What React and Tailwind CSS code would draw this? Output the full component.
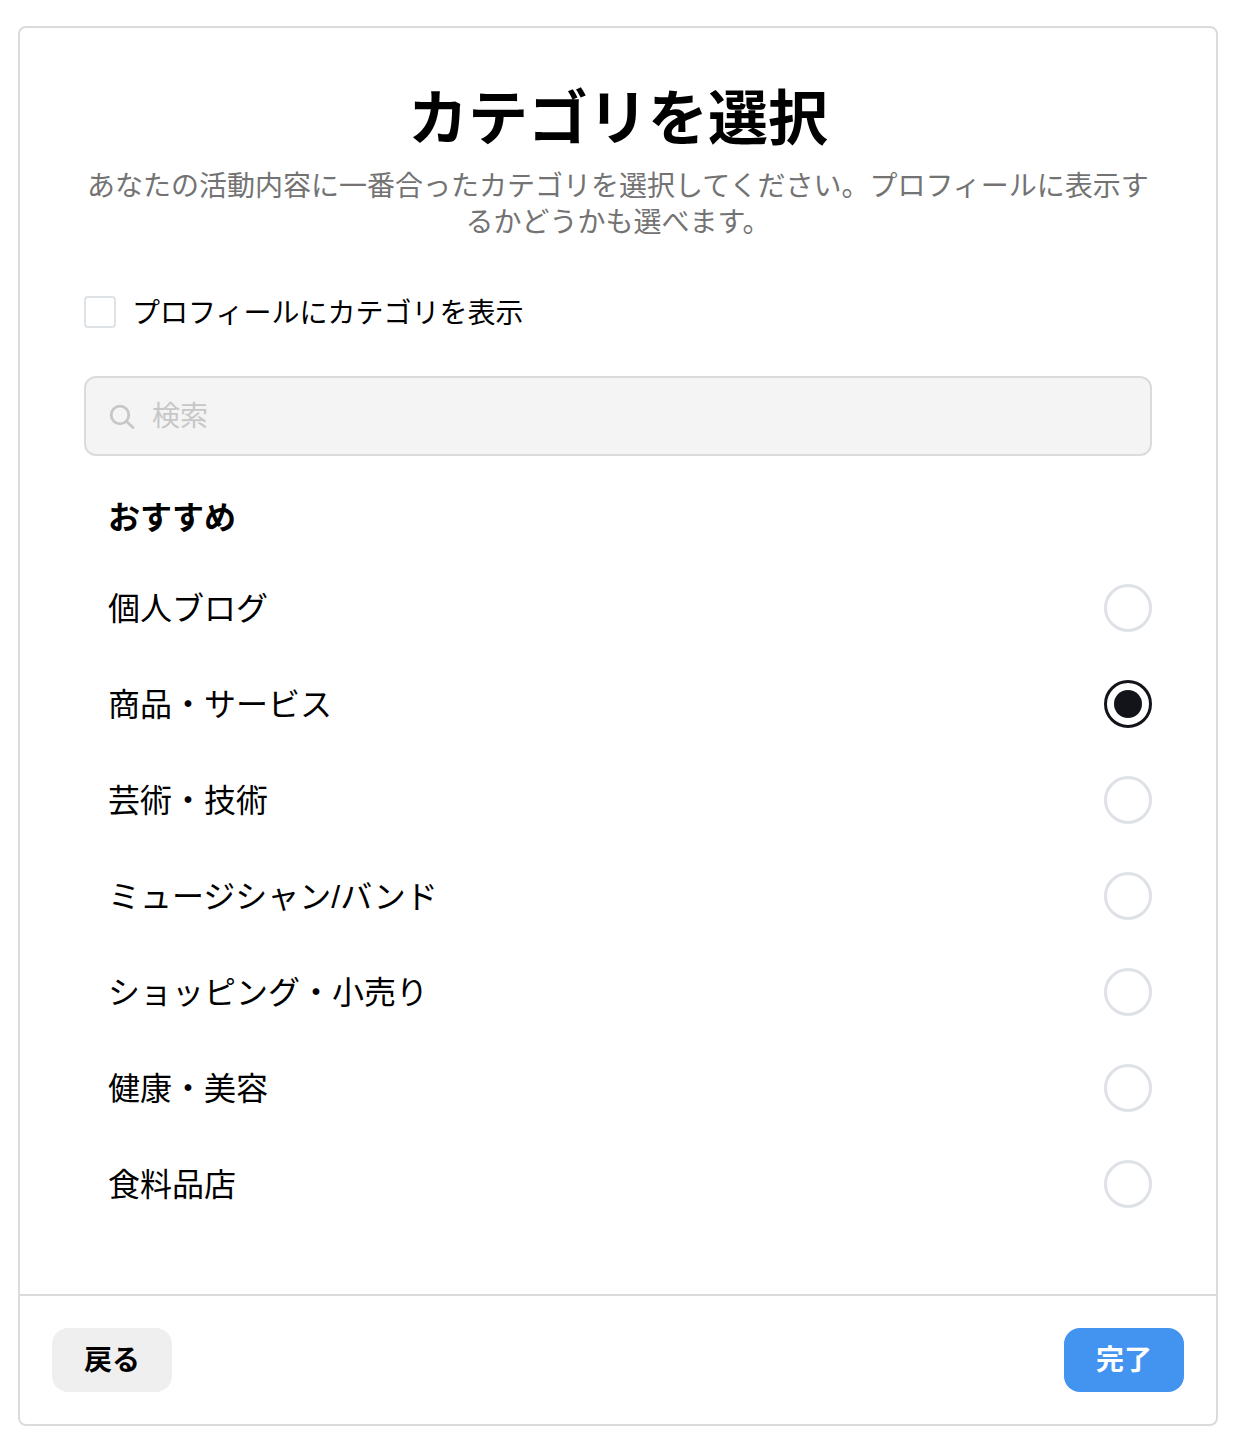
import { useState } from "react";

const categories = [
  "個人ブログ",
  "商品・サービス",
  "芸術・技術",
  "ミュージシャン/バンド",
  "ショッピング・小売り",
  "健康・美容",
  "食料品店",
];

const App = () => {
  const [selected, setSelected] = useState("商品・サービス");
  const [showOnProfile, setShowOnProfile] = useState(false);

  return (
    <div className="min-h-[1444px] bg-white pl-[18px] pt-[26px] font-['Liberation_Sans','Noto_Sans_CJK_JP',sans-serif] text-black">
      <div className="flex h-[1400px] w-[1200px] flex-col rounded-lg border-2 border-[#dbdbdb]">
        <div className="flex-1 px-[64px] pt-[56px]">
          <h1 className="text-center text-[60px] font-bold leading-[72px]">
            カテゴリを選択
          </h1>
          <p className="mt-[13px] text-center text-[28px] leading-[36px] text-[#737373]">
            あなたの活動内容に一番合ったカテゴリを選択してください。プロフィールに表示するかどうかも選べます。
          </p>

          <label className="mt-[51px] flex items-center gap-[16px]">
            <input
              type="checkbox"
              checked={showOnProfile}
              onChange={(e) => setShowOnProfile(e.target.checked)}
              className="h-[32px] w-[32px] appearance-none rounded border-2 border-[#dee2e6] bg-white"
            />
            <span className="pt-[4px] text-[28px] leading-[36px]">
              プロフィールにカテゴリを表示
            </span>
          </label>

          <div className="mt-[44px] flex h-[80px] items-center gap-[16px] rounded-xl border-2 border-[#dbdbdb] bg-[#f4f4f4] px-[22px]">
            <svg width="28" height="28" viewBox="0 0 28 28" fill="none" stroke="#c7c7c7" strokeWidth="2.75" strokeLinecap="round" className="shrink-0">
              <circle cx="12" cy="13" r="8.8" />
              <line x1="18.5" y1="19.5" x2="25" y2="25.5" />
            </svg>
            <input
              placeholder="検索"
              className="w-full bg-transparent pt-[2px] text-[28px] outline-none placeholder:text-[#c7c7c7]"
            />
          </div>

          <h2 className="mt-[40px] px-[24px] text-[32px] font-bold leading-[44px]">
            おすすめ
          </h2>

          <div className="mt-[20px]">
            {categories.map((item) => (
              <div
                key={item}
                onClick={() => setSelected(item)}
                className="flex h-[96px] items-center justify-between pl-[24px]"
              >
                <span className="pt-[2px] text-[32px] leading-[44px]">{item}</span>
                {selected === item ? (
                  <span className="flex h-[48px] w-[48px] items-center justify-center rounded-full border-[3px] border-[#121419]">
                    <span className="h-[28px] w-[28px] rounded-full bg-[#121419]" />
                  </span>
                ) : (
                  <span className="h-[48px] w-[48px] rounded-full border-[3px] border-[#dee2e6]" />
                )}
              </div>
            ))}
          </div>
        </div>

        <div className="flex h-[130px] items-center justify-between border-t-2 border-[#dbdbdb] px-[32px]">
          <button className="h-[64px] w-[120px] rounded-2xl bg-[#efefef] pt-[2px] text-[28px] font-bold">
            戻る
          </button>
          <button className="h-[64px] w-[120px] rounded-2xl bg-[#4294f0] pt-[2px] text-[28px] font-bold text-white">
            完了
          </button>
        </div>
      </div>
    </div>
  );
};

export default App;
